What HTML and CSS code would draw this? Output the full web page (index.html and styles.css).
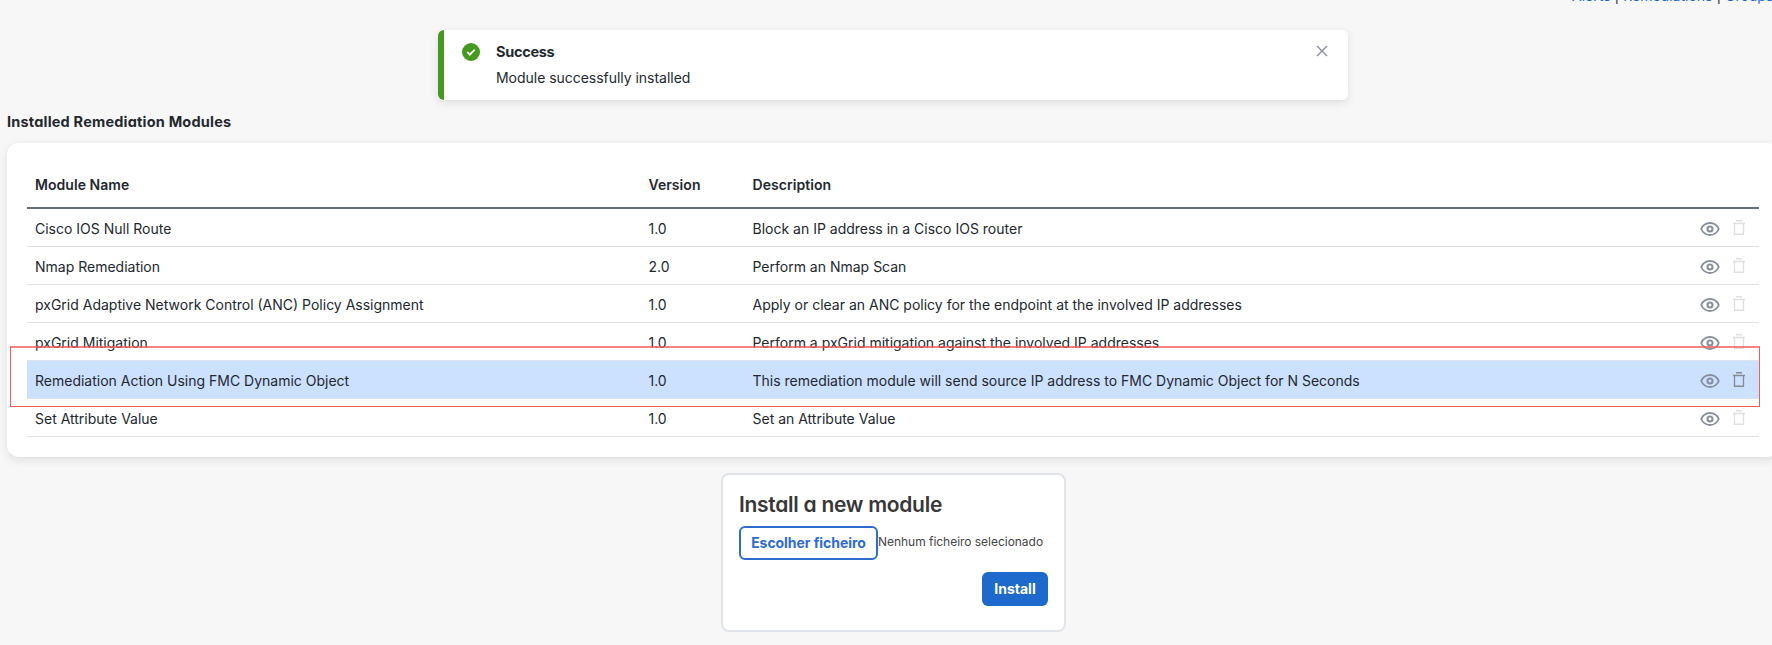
FILE: index.html
```
<!DOCTYPE html>
<html lang="en">
<head>
<meta charset="utf-8">
<title>Installed Remediation Modules</title>
<link rel="stylesheet" href="styles.css">
</head>
<body>
<svg class="sprite" aria-hidden="true">
  <symbol id="eye" viewBox="0 0 20 14">
    <path d="M1.200 7C3 3 6.200 1 10 1s7 2 8.800 6c-1.800 4-5 6-8.800 6S3 11 1.200 7z" fill="none" stroke="currentColor" stroke-width="1.800"/>
    <circle cx="10" cy="7" r="2.500" fill="none" stroke="currentColor" stroke-width="2.100"/>
  </symbol>
  <symbol id="trash" viewBox="0 0 12 15">
    <path d="M3 .75h6M0 3.500h12M1.500 3.500v10.750h9V3.500" fill="none" stroke="currentColor" stroke-width="1.300"/>
  </symbol>
</svg>
<nav class="topnav"><a href="#">Alerts</a><span>|</span><a href="#">Remediations</a><span>|</span><a href="#">Groups</a></nav>
<section class="toast">
  <svg class="toast-icon" viewBox="0 0 18 18"><circle cx="9" cy="9" r="9" fill="#46991f"/><path d="M5.300 9.200l2.500 2.500 4.900-5" fill="none" stroke="#fff" stroke-width="1.700"/></svg>
  <div class="toast-body"><h2>Success</h2><p>Module successfully installed</p></div>
  <svg class="toast-close" viewBox="0 0 12 12"><path d="M1 1l10 10M11 1L1 11" stroke="#868f9b" stroke-width="1.400"/></svg>
</section>
<h1 class="page-title">Installed Remediation Modules</h1>
<main class="card">
  <div class="row head"><span>Module Name</span><span>Version</span><span>Description</span></div>
  <div class="row"><span>Cisco IOS Null Route</span><span>1.0</span><span>Block an IP address in a Cisco IOS router</span><svg class="eye"><use href="#eye"/></svg><svg class="trash"><use href="#trash"/></svg></div>
  <div class="row"><span>Nmap Remediation</span><span>2.0</span><span>Perform an Nmap Scan</span><svg class="eye"><use href="#eye"/></svg><svg class="trash"><use href="#trash"/></svg></div>
  <div class="row"><span>pxGrid Adaptive Network Control (ANC) Policy Assignment</span><span>1.0</span><span>Apply or clear an ANC policy for the endpoint at the involved IP addresses</span><svg class="eye"><use href="#eye"/></svg><svg class="trash"><use href="#trash"/></svg></div>
  <div class="row"><span>pxGrid Mitigation</span><span>1.0</span><span>Perform a pxGrid mitigation against the involved IP addresses</span><svg class="eye"><use href="#eye"/></svg><svg class="trash"><use href="#trash"/></svg></div>
  <div class="row selected"><span>Remediation Action Using FMC Dynamic Object</span><span>1.0</span><span>This remediation module will send source IP address to FMC Dynamic Object for N Seconds</span><svg class="eye"><use href="#eye"/></svg><svg class="trash"><use href="#trash"/></svg><i class="marker"></i></div>
  <div class="row"><span>Set Attribute Value</span><span>1.0</span><span>Set an Attribute Value</span><svg class="eye"><use href="#eye"/></svg><svg class="trash"><use href="#trash"/></svg></div>
</main>
<section class="install">
  <h2>Install a new module</h2>
  <div class="picker"><button class="choose">Escolher ficheiro</button><span>Nenhum ficheiro selecionado</span></div>
  <button class="submit">Install</button>
</section>
</body>
</html>
```
FILE: styles.css
```
* { box-sizing: border-box; margin: 0; }
body { height: 645px; overflow: hidden; background: #f7f7f7; color: #23282e; font: 14px/20px Inter, sans-serif; }
.sprite { display: none; }
h1, h2 { font-family: Inter, sans-serif; font-feature-settings: "cv11"; font-weight: 700; }
.topnav { height: 6px; margin-left: 1572px; overflow: hidden; display: flex; align-items: flex-end; gap: 4px; white-space: nowrap; }
.topnav a { color: #1d69cc; text-decoration: none; }
.toast { display: flex; width: 910px; height: 70px; margin: 24px 0 0 438px; padding: 12px 20px 0 18px; background: #fff; border-left: 6px solid #46991f; border-radius: 6px; box-shadow: 0 3px 10px rgba(0,0,0,.1); }
.toast-icon { width: 18px; height: 18px; margin-top: 1px; }
.toast-body { flex: 1; margin-left: 16px; }
.toast h2 { font-size: 14.5px; line-height: 20px; letter-spacing: -.3px; }
.toast p { margin-top: 6px; letter-spacing: -.03px; }
.toast-close { width: 12px; height: 12px; margin-top: 3px; }
.page-title { margin: 12px 0 11px 7px; font-size: 14.5px; line-height: 20px; letter-spacing: .2px; }
.card { width: 1772px; height: 314px; margin-left: 7px; padding: 20px; background: #fff; border-radius: 12px; box-shadow: 0 3px 10px rgba(0,0,0,.1); }
.row { display: grid; grid-template-columns: 613.5px 104px 1fr 33px 12px; align-items: center; height: 38px; padding: 0 14px 0 8px; border-bottom: 1px solid #e0e2e8; white-space: nowrap; }
.row span { padding-top: 2px; }
.row.head { height: 46px; border-bottom: 2px solid #656c7a; font-weight: 600; letter-spacing: .05px; }
.row.head span { padding-top: 0; }
.eye { width: 20px; height: 14px; margin-top: 2px; color: #868f9b; }
.trash { width: 12px; height: 15px; color: #dedfe1; }
.selected { position: relative; background: #cce0ff; }
.selected .trash { color: #868b92; }
.marker { position: absolute; left: -17px; top: -15px; width: 1750px; height: 61px; border: 1px solid #f25c5c; border-top: 2px solid rgba(242,92,92,.75); }
.install { width: 345px; height: 159px; margin: 16px 0 0 721px; padding: 16px; display: flex; flex-direction: column; background: #fff; border: 2px solid #e1e4e8; border-radius: 8px; }
.install h2 { font-size: 21px; line-height: 26px; letter-spacing: -.28px; color: #373737; padding-top: 1px; font-weight: 600; }
.picker { display: flex; margin-top: 8px; font-size: 12px; line-height: 32px; letter-spacing: -.03px; white-space: nowrap; color: #464646; }
button { height: 34px; border-radius: 6px; font: 700 14px/20px Inter, sans-serif; padding: 0; }
.choose { width: 139px; background: #fff; border: 2px solid #2f6bd0; color: #2f6bd0; letter-spacing: -.05px; }
.submit { width: 66px; margin: 12px 0 0; align-self: flex-end; border: 0; background: #1d69cc; color: #fff; }
```
